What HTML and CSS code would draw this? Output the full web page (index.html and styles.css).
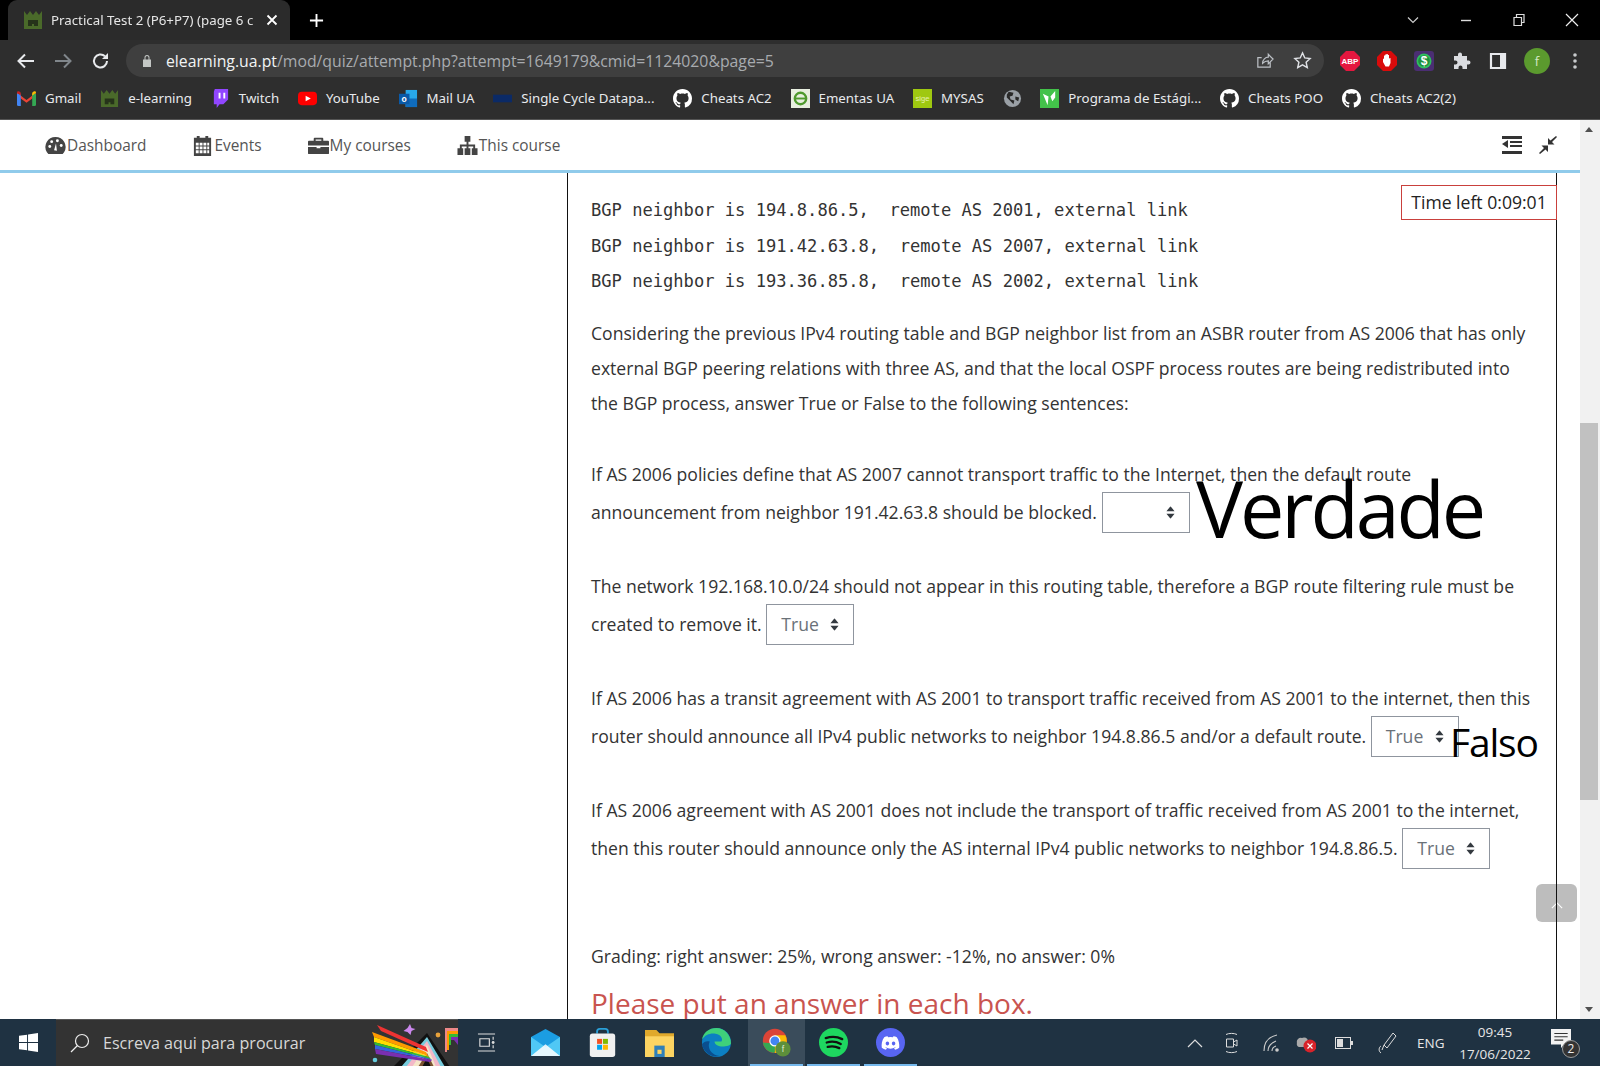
FILE: index.html
```html
<!DOCTYPE html>
<html lang="en">
<head>
  <meta charset="UTF-8" />
  <title>Practical Test 2 (P6+P7)</title>
  <link rel="stylesheet" href="styles.css">
</head>
<body>

  <svg class="defs" width="0" height="0">
    <symbol id="github" viewBox="0 0 16 16"><path fill="#fff" d="M8 0C3.58 0 0 3.58 0 8c0 3.54 2.29 6.53 5.47 7.59.4.07.55-.17.55-.38 0-.19-.01-.82-.01-1.49-2.01.37-2.53-.49-2.69-.94-.09-.23-.48-.94-.82-1.13-.28-.15-.68-.52-.01-.53.63-.01 1.08.58 1.23.82.72 1.21 1.87.87 2.33.66.07-.52.28-.87.51-1.07-1.78-.2-3.64-.89-3.64-3.95 0-.87.31-1.59.82-2.15-.08-.2-.36-1.02.08-2.12 0 0 .67-.21 2.2.82.64-.18 1.32-.27 2-.27.68 0 1.36.09 2 .27 1.53-1.04 2.2-.82 2.2-.82.44 1.1.16 1.92.08 2.12.51.56.82 1.27.82 2.15 0 3.07-1.87 3.75-3.65 3.95.29.25.54.73.54 1.48 0 1.07-.01 1.93-.01 2.2 0 .21.15.46.55.38A8.013 8.013 0 0016 8c0-4.42-3.58-8-8-8z"/></symbol>
    <symbol id="ua" viewBox="0 0 20 20"><path fill="#4a6a2a" d="M1 1l3 4 3-4 3 4 3-4 3 4 3-4v18H1z"/><path fill="#26331a" d="M5 10h10v6h-4v-2H9v2H5z"/></symbol>
    <symbol id="arrows" viewBox="0 0 10 14"><path fill="#343a40" d="M5 0l4.500 5.500h-9zM5 14L.5 8.500h9z"/></symbol>
  </svg>

  <div class="tabstrip">
    <div class="tab">
      <svg class="ico18" viewBox="0 0 20 20"><use href="#ua"/></svg>
      <span class="tab-title">Practical Test 2 (P6+P7) (page 6 c</span>
      <svg class="tab-x" viewBox="0 0 12 12"><path d="M1.500 1.500l9 9M10.500 1.500l-9 9" stroke="#fff" stroke-width="1.800"/></svg>
    </div>
    <svg class="tab-new" viewBox="0 0 16 16"><path d="M8 1v14M1 8h14" stroke="#fff" stroke-width="2"/></svg>
    <div class="win-btns">
      <svg viewBox="0 0 14 14"><path d="M2 4.500l5 5 5-5" fill="none" stroke="#ccc" stroke-width="1.200"/></svg>
      <svg viewBox="0 0 14 14"><path d="M2 7.500h10" stroke="#ddd" stroke-width="1.400"/></svg>
      <svg viewBox="0 0 14 14"><path d="M2 4.500h7.500v8H2zM4.500 4.500V1.500H12v8H9.500" fill="none" stroke="#ddd" stroke-width="1.200"/></svg>
      <svg viewBox="0 0 14 14"><path d="M1 1l12 12M13 1L1 13" stroke="#eee" stroke-width="1.200"/></svg>
    </div>
  </div>

  <div class="toolbar">
    <svg class="tool" viewBox="0 0 20 20"><path d="M18 10H3M9 3.500L2.500 10 9 16.500" fill="none" stroke="#e8eaed" stroke-width="2"/></svg>
    <svg class="tool" viewBox="0 0 20 20"><path d="M2 10h15M11 3.500l6.500 6.500-6.500 6.500" fill="none" stroke="#80868b" stroke-width="2"/></svg>
    <svg class="tool" viewBox="0 0 20 20"><path d="M16 10a6.500 6.500 0 1 1-2-4.700" fill="none" stroke="#e8eaed" stroke-width="2"/><path d="M17 2v6h-6z" fill="#e8eaed"/></svg>
    <div class="omnibox">
      <svg class="lock" viewBox="0 0 10 13"><path fill="#c4c7c5" d="M1 5.500h8V13H1zM2.500 5.500V3.500a2.500 2.500 0 0 1 5 0v2H6.500v-2a1.500 1.500 0 0 0-3 0v2z"/></svg>
      <span class="url"><b>elearning.ua.pt</b>/mod/quiz/attempt.php?attempt=1649179&amp;cmid=1124020&amp;page=5</span>
      <svg class="omni-ico" viewBox="0 0 20 20"><path d="M16 12v5H3V7h4M8 13c0-4 3-6.500 6-6.500V3.500l5 5-5 5v-3c-2.500 0-4.500 1-6 2.500z" fill="none" stroke="#bdc1c6" stroke-width="1.300"/></svg>
      <svg class="omni-ico" viewBox="0 0 20 20"><path d="M10 2l2.400 5.300 5.600.6-4.200 3.900 1.200 5.700-5-2.900-5 2.900 1.200-5.700L2 7.900l5.600-.6z" fill="none" stroke="#dfe1e5" stroke-width="1.500"/></svg>
    </div>
    <div class="exts">
      <svg viewBox="0 0 20 20"><path fill="#e5173f" d="M6 0h8l6 6v8l-6 6H6l-6-6V6z"/><text x="10" y="13" class="abp">ABP</text></svg>
      <svg viewBox="0 0 20 20"><path fill="#d90b0b" d="M6 0h8l6 6v8l-6 6H6l-6-6V6z"/><path fill="#fff" d="M6 8l1-.5V4.500h1.200V3.500h1.300v-.5h1.300v1h1.200v3.500l1.500-.5v5l-1.500 3.500H8.500L6 11z"/></svg>
      <svg viewBox="0 0 20 20"><rect width="20" height="20" rx="3" fill="#4b2e73"/><circle cx="10" cy="10" r="7.500" fill="#2fbf5f"/><circle cx="10" cy="10" r="5.800" fill="#1f8f3f"/><text x="10" y="14" class="dollar">$</text></svg>
      <svg viewBox="0 0 20 20"><path fill="#dadce0" d="M7 3.500a2 2 0 0 1 4 0V5h5v4.500h1.500a2 2 0 0 1 0 4H16V18h-4.500v-1.500a2 2 0 0 0-4 0V18H3v-4.500h1.500a2 2 0 0 0 0-4H3V5h4z"/></svg>
      <svg viewBox="0 0 20 20"><path fill="none" stroke="#e8eaed" stroke-width="2.200" d="M3 3h14v14H3z"/><path fill="#e8eaed" d="M12 3h5v14h-5z"/></svg>
      <div class="avatar">f</div>
      <svg class="dots" viewBox="0 0 4 20"><circle cx="2" cy="4" r="1.800" fill="#c8cacc"/><circle cx="2" cy="10" r="1.800" fill="#c8cacc"/><circle cx="2" cy="16" r="1.800" fill="#c8cacc"/></svg>
    </div>
  </div>

  <div class="bookmarks">
    <a class="bm"><svg viewBox="0 0 20 16"><path fill="#ea4335" d="M0 2l10 7.500L20 2v3l-10 7.500L0 5z"/><path fill="#4285f4" d="M0 3h4v13H1.500A1.500 1.500 0 0 1 0 14.500z"/><path fill="#34a853" d="M16 3h4v11.500a1.500 1.500 0 0 1-1.500 1.500H16z"/><path fill="#fbbc04" d="M16 5l4-3V1.500C20 .5 18.500 0 17.500.7L16 2z"/><path fill="#c5221f" d="M4 5L0 2v-.5C0 .5 1.500 0 2.500.7L4 2z"/></svg>Gmail</a>
    <a class="bm"><svg viewBox="0 0 20 20"><use href="#ua"/></svg>e-learning</a>
    <a class="bm"><svg viewBox="0 0 20 20"><path fill="#9146ff" d="M4 0h14v11l-5 5H9l-3 4v-4H3V3z"/><path fill="#fff" d="M8 4h2v6H8zM13 4h2v6h-2z"/></svg>Twitch</a>
    <a class="bm"><svg viewBox="0 0 20 20"><rect y="3" width="20" height="14" rx="4" fill="#f00"/><path fill="#fff" d="M8 7l5.500 3L8 13z"/></svg>YouTube</a>
    <a class="bm"><svg viewBox="0 0 20 20"><path fill="#28a8ea" d="M7 1h12v18H7z"/><path fill="#0f6cbd" d="M7 10h12v9H7z"/><rect y="5" width="11" height="11" fill="#0a5aa8"/><text x="5.500" y="14" class="oa">o</text></svg>Mail UA</a>
    <a class="bm"><svg viewBox="0 0 20 20"><rect y="6" width="20" height="8" fill="#0b2a66"/></svg>Single Cycle Datapa...</a>
    <a class="bm"><svg viewBox="0 0 16 16"><use href="#github"/></svg>Cheats AC2</a>
    <a class="bm"><svg viewBox="0 0 20 20"><rect width="20" height="20" fill="#e8efe0"/><circle cx="10" cy="10" r="6" fill="none" stroke="#4f9a2e" stroke-width="2.500"/><path d="M5 10h10" stroke="#4f9a2e" stroke-width="2"/></svg>Ementas UA</a>
    <a class="bm"><svg viewBox="0 0 20 20"><rect width="20" height="20" fill="#9fc810"/><text x="10" y="13" class="sige">sige</text></svg>MYSAS</a>
    <a class="bm"><svg viewBox="0 0 20 20"><circle cx="10" cy="10" r="9" fill="#9aa0a6"/><path fill="#292929" d="M6 3l5 1-1 3-3 1 1 3 4 1-1 4-3-3-4-4V6zM13 8l4 1-1 4-3-2z"/></svg></a>
    <a class="bm"><svg viewBox="0 0 20 20"><rect width="20" height="20" fill="#43c24a"/><path fill="#fff" d="M3 5l6 3-1 9zM11 8l5-6v7l-3 4z"/></svg>Programa de Estági...</a>
    <a class="bm"><svg viewBox="0 0 16 16"><use href="#github"/></svg>Cheats POO</a>
    <a class="bm"><svg viewBox="0 0 16 16"><use href="#github"/></svg>Cheats AC2(2)</a>
  </div>

  <div class="viewport">
    <div class="page">
      <nav class="topnav">
        <a class="nav-item"><svg viewBox="0 0 22 20"><path fill="#444" d="M11 1a10.500 10.500 0 0 0-9 16l1.500 2h15l1.500-2a10.500 10.500 0 0 0-9-16z"/><g fill="#fff"><circle cx="5" cy="11" r="1.500"/><circle cx="7" cy="6" r="1.500"/><circle cx="13" cy="5" r="1.500"/><circle cx="17" cy="10" r="1.500"/><path d="M9.500 15l2-7 1 7.500z"/></g></svg>Dashboard</a>
        <a class="nav-item"><svg viewBox="0 0 20 22"><path fill="#444" d="M1 3h3V1h3v2h6V1h3v2h3v19H1z"/><path fill="#fff" d="M3 8h3v3H3zM7 8h3v3H7zM11 8h3v3h-3zM15 8h2v3h-2zM3 12h3v3H3zM7 12h3v3H7zM11 12h3v3h-3zM15 12h2v3h-2zM3 16h3v3H3zM7 16h3v3H7zM11 16h3v3h-3zM15 16h2v3h-2z"/></svg>Events</a>
        <a class="nav-item"><svg viewBox="0 0 22 20"><path fill="#444" d="M7 2h8a1 1 0 0 1 1 1v2h5a1 1 0 0 1 1 1v4H0V6a1 1 0 0 1 1-1h5V3a1 1 0 0 1 1-1zm1 1.800V5h6V3.800zM0 11.500h9V13h4v-1.500h9V18a1 1 0 0 1-1 1H1a1 1 0 0 1-1-1z"/></svg>My courses</a>
        <a class="nav-item"><svg viewBox="0 0 22 20"><path fill="#444" d="M8 0h6v6h-2v3h7v4h2.500v7h-6v-7H17v-2h-5v2h2v7H8v-7h2v-2H5v2h1.500v7h-6v-7H3V9h7V6H8z"/></svg>This course</a>
        <div class="nav-right">
          <svg viewBox="0 0 20 18"><path fill="#333" d="M0 0h20v3H0zM8 5h12v2H8zM8 9h12v2H8zM0 15h20v3H0zM6 4v8L0 8z"/></svg>
          <svg viewBox="0 0 18 18"><path fill="#333" d="M17 0l1 1-5 5 2.500 2.500H9V2l2.500 2.500zM1 18l-1-1 5-5-2.500-2.500H9V16l-2.500-2.500z"/></svg>
        </div>
      </nav>

      <div class="page-body">
        <aside class="left-space"></aside>
        <main class="content">
          <pre class="mono">BGP neighbor is 194.8.86.5,  remote AS 2001, external link
BGP neighbor is 191.42.63.8,  remote AS 2007, external link
BGP neighbor is 193.36.85.8,  remote AS 2002, external link</pre>
          <p class="intro">Considering the previous IPv4 routing table and BGP neighbor list from an ASBR router from AS 2006 that has only external BGP peering relations with three AS, and that the local OSPF process routes are being redistributed into the BGP process, answer True or False to the following sentences:</p>

          <p class="qline first">If AS 2006 policies define that AS 2007 cannot transport traffic to the Internet, then the default route announcement from neighbor 191.42.63.8 should be blocked. <span class="pick empty"><span></span><svg viewBox="0 0 10 14"><use href="#arrows"/></svg></span></p>
          <p class="qline">The network 192.168.10.0/24 should not appear in this routing table, therefore a BGP route filtering rule must be created to remove it. <span class="pick"><span>True</span><svg viewBox="0 0 10 14"><use href="#arrows"/></svg></span></p>
          <p class="qline">If AS 2006 has a transit agreement with AS 2001 to transport traffic received from AS 2001 to the internet, then this router should announce all IPv4 public networks to neighbor 194.8.86.5 and/or a default route. <span class="pick"><span>True</span><svg viewBox="0 0 10 14"><use href="#arrows"/></svg></span></p>
          <p class="qline">If AS 2006 agreement with AS 2001 does not include the transport of traffic received from AS 2001 to the internet, then this router should announce only the AS internal IPv4 public networks to neighbor 194.8.86.5. <span class="pick"><span>True</span><svg viewBox="0 0 10 14"><use href="#arrows"/></svg></span></p>

          <p class="grading">Grading: right answer: 25%, wrong answer: -12%, no answer: 0%</p>
          <p class="warn">Please put an answer in each box.</p>

          <div class="timer">Time left 0:09:01</div>
          <div class="overlay verdade">Verdade</div>
          <div class="overlay falso">Falso</div>
          <div class="to-top"><svg viewBox="0 0 14 8"><path d="M1 7l6-6 6 6" fill="none" stroke="#fff" stroke-width="1.300"/></svg></div>
        </main>
      </div>
    </div>
    <div class="scrollbar">
      <span class="arrow-up"></span>
      <div class="thumb"></div>
      <span class="arrow-down"></span>
    </div>
  </div>

  <div class="taskbar">
    <div class="start"><svg viewBox="0 0 20 20"><path fill="#fff" d="M0 3l8.500-1.200V9.500H0zM9.500 1.600L20 0v9.500H9.500zM0 10.500h8.500v7.700L0 17zM9.500 10.500H20V20L9.500 18.400z"/></svg></div>
    <div class="search">
      <svg class="search-ico" viewBox="0 0 20 20"><circle cx="12" cy="8" r="6.500" fill="none" stroke="#eee" stroke-width="1.200"/><path d="M7.500 12.500L1 19" stroke="#eee" stroke-width="1.200"/></svg>
      <span>Escreva aqui para procurar</span>
      <svg class="pride" viewBox="0 4 98 47">
        <path fill="#111" d="M67 17L33 51h57z"/><path fill="#7cd" d="M67 21L41 51h44z"/><path fill="#f3b8c8" d="M67 25L46 51h35z"/><path fill="#f5e6c8" d="M67 29L52 51h24z"/><path fill="#7a5230" d="M67 37L58 51h16z"/><path fill="#111" d="M67 42L62 51h9z"/>
        <path fill="#e33" d="M17 9l49 22 2 5-47-21z"/><path fill="#f90" d="M12 16l54 20 2 4-54-19z"/><path fill="#fd0" d="M14 21l54 19 1 1-55-15z"/><path fill="#3b3" d="M14 26l55 15 2 2-56-14z"/><path fill="#36d" d="M15 29l56 14 1 1-57-11z"/><path fill="#7a2fb0" d="M15 33l57 11-2 2-54-8z"/>
        <path fill="#c8e" d="M50 8l1.500 4 4 1-4 2-1 4-3-3-4-1 4-3z"/><circle cx="15" cy="44" r="2.300" fill="#6cd"/><circle cx="78" cy="19" r="2.400" fill="#e9a23b"/>
        <path fill="#e88" d="M85 12h13v3H87v21h-2z"/><path fill="#f90" d="M87 15h11v3H89v16h-2z"/><path fill="#3b3" d="M89 18h9v3h-7v8h-2z"/><path fill="#7a2fb0" d="M91 21h7v8l-4-5h-3z"/>
      </svg>
    </div>
    <div class="tb-app taskview"><svg viewBox="0 0 20 20"><path d="M1 1h18M1 19h18M3 6h10v8H3z" fill="none" stroke="#ddd" stroke-width="1.200"/><path d="M17 4v3M17 13v3" stroke="#ddd" stroke-width="1.200"/><circle cx="17" cy="10" r="1.500" fill="#ddd"/></svg></div>
    <div class="tb-app"><svg viewBox="0 0 32 30"><path fill="#1b9de2" d="M0 9L16 0l16 9v21H0z"/><path fill="#50c8f5" d="M0 9l16 11L32 9v21H0z"/><path fill="#fff" opacity=".85" d="M0 30l16-13 16 13z"/></svg></div>
    <div class="tb-app"><svg viewBox="0 0 28 32"><path d="M8 6V4a3 3 0 0 1 3-3h6a3 3 0 0 1 3 3v2" fill="none" stroke="#2aa0d8" stroke-width="2"/><rect y="6" width="28" height="26" rx="3" fill="#f0f0f0"/><path fill="#f25022" d="M8 12h5.500v5.500H8z"/><path fill="#7fba00" d="M14.500 12H20v5.500h-5.500z"/><path fill="#00a4ef" d="M8 18.500h5.500V24H8z"/><path fill="#ffb900" d="M14.500 18.500H20V24h-5.500z"/></svg></div>
    <div class="tb-app"><svg viewBox="0 0 28 28"><path fill="#e0a92c" d="M0 2h11l3 3h14v4H0z"/><path fill="#fcd462" d="M0 8h28v20H0z"/><path fill="#2f7fb8" d="M9 17h10v11H9z"/><path fill="#fcd462" d="M12 21h4v4h-4z"/></svg></div>
    <div class="tb-app"><svg viewBox="0 0 30 30"><circle cx="15" cy="15" r="15" fill="#0c7fc2"/><path fill="#3fd07a" d="M30 16c0-9-7-16-15-16S1 5 0 12c3-5 9-7 14-6 6 1 8 6 6 8h-7c0 4 6 6 11 5 3-.5 5-1 6-3z"/><path fill="#0a4f8f" d="M8 14c-3 6 1 14 10 15-7 2-16-3-18-12 2-3 5-4 8-3z"/></svg></div>
    <div class="tb-app active chrome"><svg viewBox="0 0 36 36"><circle cx="16" cy="16" r="15" fill="#db4437"/><path fill="#34a853" d="M1 18a15 15 0 0 0 14 13l7-12-11 0z"/><path fill="#fbbc05" d="M16 31a15 15 0 0 0 13-22H16z"/><circle cx="16" cy="16" r="7" fill="#fff"/><circle cx="16" cy="16" r="5.500" fill="#4285f4"/><circle cx="26" cy="26" r="9.500" fill="#5d8f3b"/><text x="26" y="30" class="pf">f</text></svg></div>
    <div class="tb-app active"><svg viewBox="0 0 30 30"><circle cx="15" cy="15" r="15" fill="#1ed760"/><path d="M7 10.500c6-2 12-1.500 17 1M8 15c5-1.500 10-1 14.500 1.500M9 19.500c4-1 8-.8 12 1.300" fill="none" stroke="#111" stroke-width="2.400" stroke-linecap="round"/></svg></div>
    <div class="tb-app active"><svg viewBox="0 0 30 30"><circle cx="15" cy="15" r="15" fill="#5865f2"/><path fill="#fff" d="M21.500 9.500A14 14 0 0 0 18 8.500l-.5 1a12 12 0 0 0-5 0l-.5-1a14 14 0 0 0-3.500 1C6 13 5.500 17 6 20.500a14 14 0 0 0 4.300 2l1-1.500-1.700-.8.400-.3a10 10 0 0 0 10 0l.4.300-1.700.8 1 1.500a14 14 0 0 0 4.300-2c.5-4-.5-8-2.500-11zM11.800 18c-1 0-1.800-.9-1.800-2s.8-2 1.800-2 1.800.9 1.800 2-.8 2-1.800 2zm6.400 0c-1 0-1.800-.9-1.800-2s.8-2 1.800-2 1.800.9 1.800 2-.8 2-1.800 2z"/></svg></div>

    <div class="tray">
      <svg class="t-chev" viewBox="0 0 16 10"><path d="M1 9l7-7 7 7" fill="none" stroke="#ddd" stroke-width="1.200"/></svg>
      <svg class="t-meet" viewBox="0 0 14 22"><path d="M1 2.500c3-1.500 8-1.500 11 0M1 19.500c3 1.500 8 1.500 11 0" fill="none" stroke="#ddd"/><path d="M1.500 7h7v8h-7zM8.500 10l3.500-2v6l-3.500-2z" fill="none" stroke="#ddd"/></svg>
      <svg class="t-wifi" viewBox="0 0 16 18"><path d="M1 17C1 9 5 3 14 1M5 17c0-5 3-8 8-10M9 17c0-2 1-4 4-5" fill="none" stroke="#ccc" stroke-width="1.100"/><circle cx="14" cy="16" r="1.800" fill="#ccc"/></svg>
      <svg class="t-cloud" viewBox="0 0 20 20"><path fill="#aaa" d="M1 10a4 4 0 0 1 5-5 4 4 0 0 1 6 3h-1a6 6 0 0 0-3 6H3a3 3 0 0 1-2-4z"/><circle cx="14" cy="13" r="6.500" fill="#d8232a"/><path d="M11.500 10.500l5 5M16.500 10.500l-5 5" stroke="#fff" stroke-width="1.200"/></svg>
      <svg class="t-batt" viewBox="0 0 18 12"><rect x=".5" y=".5" width="15" height="11" fill="none" stroke="#ddd"/><rect x="2" y="2" width="6" height="8" fill="#ddd"/><rect x="16" y="4" width="2" height="4" fill="#ddd"/></svg>
      <svg class="t-pen" viewBox="0 0 20 22"><path d="M15 1l3 3-9 12-3-3zM6 13l-2 5M3 21c-3-2-2-6 0-7" fill="none" stroke="#ddd"/></svg>
      <span class="t-lang">ENG</span>
      <div class="t-clock"><span>09:45</span><span>17/06/2022</span></div>
      <div class="t-notif">
        <svg viewBox="0 0 18 18"><path fill="#f2f2f2" d="M0 0h18v14h-6l-3 3v-3H0z"/><path d="M3 4h12M3 7h12M3 10h8" stroke="#333"/></svg>
        <span class="badge">2</span>
      </div>
    </div>
  </div>

</body>
</html>
```

FILE: styles.css
```css
* {
  margin: 0; padding: 0; box-sizing: border-box;
}

html, body {
  width: 1600px;
  height: 1066px;
  overflow: hidden;
}

body {
  display: flex;
  flex-direction: column;
  font-family: 'Open Sans', sans-serif;
  background: #fff;
}

.defs {
  position: absolute;
}

svg {
  display: block;
  flex-shrink: 0;
}

/* browser chrome */
.tabstrip {
  height: 40px;
  background: #000;
  display: flex;
  align-items: center;
}

.tab {
  width: 282px;
  height: 40px;
  margin: 0 0 0 8px;
  padding: 0 12px 0 15px;
  background: #2b2b2b;
  border-radius: 9px 9px 0 0;
  display: flex;
  align-items: center;
  color: #e8eaed;
}

.ico18 {
  width: 20px;
  height: 20px;
}

.tab-title {
  flex: 1;
  margin-left: 8px;
  font: 13.3px 'Noto Sans', sans-serif;
  white-space: nowrap;
  overflow: hidden;
  color: #e6e6e6;
  -webkit-mask-image: linear-gradient(90deg, #000 92%, rgba(0,0,0,0.25));
  mask-image: linear-gradient(90deg, #000 92%, rgba(0,0,0,0.25));
}

.tab-x {
  width: 12px;
  height: 12px;
}

.tab-new {
  width: 15px;
  height: 15px;
  margin-left: 19px;
}

.win-btns {
  margin-left: auto;
  display: flex;
  gap: 39px;
  padding-right: 21px;
}

.win-btns svg {
  width: 14px;
  height: 14px;
}

.toolbar {
  height: 41px;
  background: #2e2e2e;
  display: flex;
  align-items: center;
  padding-left: 16px;
}

.tool {
  width: 20px;
  height: 20px;
  margin-right: 17px;
}

.tool:nth-of-type(3) {
  margin-left: 1px;
  margin-right: 16px;
}

.omnibox {
  width: 1198px;
  height: 33px;
  margin-left: -1px;
  background: #3f3f3f;
  border-radius: 17px;
  display: flex;
  align-items: center;
  padding: 0 12px 0 16px;
}

.lock {
  width: 10px;
  height: 13px;
}

.url {
  flex: 1;
  margin-left: 14px;
  font: 15.8px 'Open Sans', sans-serif;
  color: #a8abaf;
  white-space: nowrap;
}

.url b {
  font-weight: 400;
  color: #f1f3f4;
}

.omni-ico {
  width: 19px;
  height: 19px;
  margin-left: 19px;
}

.exts {
  display: flex;
  align-items: center;
  gap: 17px;
  margin-left: 16px;
}

.exts svg {
  width: 20px;
  height: 20px;
}

.exts .dots {
  width: 4px;
  margin-left: 6px;
}

.abp {
  font: bold 8px 'Liberation Sans', sans-serif;
  fill: #fff;
  text-anchor: middle;
}

.dollar {
  font: bold 12px 'Liberation Sans', sans-serif;
  fill: #fff;
  text-anchor: middle;
}

.pf {
  font: 11px 'Liberation Sans', sans-serif;
  fill: #dfeccf;
  text-anchor: middle;
}

.avatar {
  width: 26px;
  height: 26px;
  margin: 0 0 0 -1px;
  border-radius: 50%;
  background: #5b9a2e;
  color: #d5e8c6;
  font-size: 13px;
  line-height: 26px;
  text-align: center;
}

.bookmarks {
  height: 39px;
  background: #2e2e2e;
  border-bottom: 1px solid #555;
  display: flex;
  align-items: center;
  gap: 18.8px;
  padding: 0 0 4px 17px;
}

.bm {
  display: flex;
  align-items: center;
  gap: 9px;
  font: 13.3px 'Noto Sans', sans-serif;
  color: #e8eaed;
  white-space: nowrap;
}

.bm svg {
  width: 19px;
  height: 19px;
}

.oa {
  font: bold 9px 'Liberation Sans', sans-serif;
  fill: #fff;
  text-anchor: middle;
}

.sige {
  font: 8px 'Liberation Sans', sans-serif;
  fill: #e6f2b0;
  text-anchor: middle;
}

/* page */
.viewport {
  flex: 1;
  display: flex;
  min-height: 0;
  overflow: hidden;
}

.page {
  flex: 1;
  min-width: 0;
  display: flex;
  flex-direction: column;
}

.topnav {
  height: 53px;
  flex-shrink: 0;
  padding: 0 22px 0 45px;
  border-bottom: 3px solid #90cbeb;
  display: flex;
  align-items: center;
  gap: 46px;
}

.nav-item {
  display: flex;
  align-items: center;
  gap: 1px;
  font-size: 15.4px;
  color: #555;
}

.nav-item svg {
  width: 21px;
  height: 21px;
}

.nav-right {
  margin-left: auto;
  display: flex;
  align-items: center;
  gap: 16px;
}

.nav-right svg {
  width: 20px;
  height: 18px;
}

.page-body {
  flex: 1;
  min-height: 0;
  display: flex;
  padding-right: 23px;
}

.left-space {
  width: 567px;
}

.content {
  flex: 1;
  position: relative;
  border-left: 1px solid #111;
  border-right: 1px solid #111;
  padding: 20px 18px 0 23px;
  font-size: 17.6px;
  line-height: 35px;
  color: #333;
}

.mono {
  font: 17.1px/35.7px 'DejaVu Sans Mono', monospace;
  color: #333;
}

.intro {
  margin-top: 16px;
}

.qline {
  margin-top: 32px;
}

.qline.first {
  margin-top: 36px;
}

.pick {
  display: inline-flex;
  align-items: center;
  justify-content: space-between;
  width: 88px;
  height: 41px;
  margin-bottom: 4px;
  padding: 0 14px;
  vertical-align: middle;
  border: 1px solid #8f959e;
  color: #6a7178;
  line-height: 1;
}

.pick svg {
  width: 9px;
  height: 13px;
}

.grading {
  margin-top: 66px;
}

.warn {
  margin-top: 11px;
  font-size: 28px;
  line-height: 36px;
  color: #c9544f;
}

.timer {
  position: absolute;
  top: 12px;
  right: -1px;
  width: 156px;
  height: 35px;
  border: 1px solid #c9403c;
  background: #fff;
  text-align: center;
  line-height: 33px;
  color: #222;
}

.overlay {
  position: absolute;
  color: #000;
  line-height: 1;
}

.verdade {
  left: 628px;
  top: 295px;
  font-size: 79px;
  letter-spacing: -3.1px;
}

.falso {
  left: 882px;
  top: 549px;
  font-size: 39px;
  letter-spacing: -1.2px;
}

.to-top {
  position: absolute;
  right: -21px;
  top: 711px;
  width: 41px;
  height: 38px;
  background: #bdbdbd;
  border-radius: 6px;
  display: flex;
  align-items: center;
  justify-content: center;
  z-index: -1;
}

.to-top svg {
  width: 12px;
  height: 7px;
  margin-top: 4px;
}

.scrollbar {
  width: 20px;
  background: #f1f1f1;
  position: relative;
}

.thumb {
  position: absolute;
  left: 0;
  right: 2px;
  top: 303px;
  height: 377px;
  background: #c1c1c1;
}

.arrow-up, .arrow-down {
  position: absolute;
  left: 5px;
  border-left: 4px solid transparent;
  border-right: 4px solid transparent;
}

.arrow-up {
  top: 7px;
  border-bottom: 5px solid #505050;
}

.arrow-down {
  bottom: 7px;
  border-top: 5px solid #505050;
}

/* windows taskbar */
.taskbar {
  height: 47px;
  flex-shrink: 0;
  background: #1f3242;
  display: flex;
  align-items: stretch;
}

.start {
  width: 56px;
  display: flex;
  align-items: center;
  justify-content: center;
}

.start svg {
  width: 19px;
  height: 19px;
}

.search {
  width: 402px;
  background: #333;
  border-top: 1px solid #555;
  display: flex;
  align-items: center;
  padding-left: 14px;
  color: #d8d8d8;
  font: 16.1px 'Open Sans', sans-serif;
  position: relative;
  overflow: hidden;
}

.search-ico {
  width: 20px;
  height: 20px;
  margin-right: 13px;
}

.pride {
  position: absolute;
  right: 0;
  top: 0;
  width: 98px;
  height: 47px;
}

.tb-app {
  width: 57px;
  display: flex;
  align-items: center;
  justify-content: center;
  position: relative;
}

.tb-app svg {
  width: 29px;
  height: 29px;
}

.tb-app.taskview {
  margin-right: 2px;
}

.tb-app.taskview svg {
  width: 19px;
  height: 19px;
}

.tb-app.active::after {
  content: "";
  position: absolute;
  left: 2px;
  right: 2px;
  bottom: 0;
  height: 2px;
  background: #76b9ed;
}

.tb-app.chrome {
  margin-left: 3px;
  background: #3a4c5b;
}

.tray {
  margin-left: auto;
  display: flex;
  align-items: center;
  color: #e6e6e6;
  padding-right: 20px;
}

.t-chev { width: 16px; height: 10px; margin-right: 22px; }
.t-meet { width: 14px; height: 24px; margin-right: 24px; }
.t-wifi { width: 16px; height: 18px; margin-right: 17px; }
.t-cloud { width: 20px; height: 20px; margin-right: 19px; }
.t-batt { width: 18px; height: 12px; margin-right: 25px; }
.t-pen { width: 20px; height: 22px; margin-right: 19px; }

.t-lang {
  font-size: 13.5px;
  width: 28px;
  margin-right: 14px;
}

.t-clock {
  display: flex;
  flex-direction: column;
  align-items: center;
  font-size: 13.5px;
  line-height: 22px;
  width: 72px;
  margin-right: 20px;
}

.t-notif {
  position: relative;
  width: 29px;
  height: 30px;
}

.t-notif svg {
  width: 20px;
  height: 22px;
}

.badge {
  position: absolute;
  right: 0;
  bottom: 0;
  width: 18px;
  height: 18px;
  border-radius: 50%;
  background: #333;
  border: 1px solid #999;
  font-size: 12px;
  line-height: 16px;
  text-align: center;
  color: #eee;
}
```
